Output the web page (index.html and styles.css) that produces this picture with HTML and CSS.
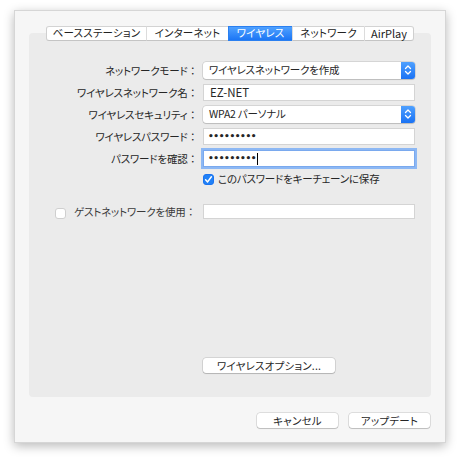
FILE: index.html
```html
<!DOCTYPE html>
<html lang="ja">
<head>
<meta charset="utf-8">
<link rel="stylesheet" href="styles.css">
</head>
<body>
<div class="window">
  <div class="tabs">
    <div class="tab t1">ベースステーション</div>
    <div class="tab t2">インターネット</div>
    <div class="tab t3 sel">ワイヤレス</div>
    <div class="tab t4">ネットワーク</div>
    <div class="tab t5">AirPlay</div>
  </div>
  <div class="group">
    <div class="form">
      <div class="label">ネットワークモード<span class="colon">：</span></div>
      <div class="popup"><span>ワイヤレスネットワークを作成</span><span class="stepper"><svg width="14" height="16" viewBox="0 0 14 16"><path d="M4.5 6.5 L7 4 L9.5 6.5 M4.5 9.5 L7 12 L9.5 9.5" fill="none" stroke="#fff" stroke-width="1.3" stroke-linecap="round" stroke-linejoin="round"/></svg></span></div>
      <div class="label">ワイヤレスネットワーク名<span class="colon">：</span></div>
      <div class="field">EZ-NET</div>
      <div class="label">ワイヤレスセキュリティ<span class="colon">：</span></div>
      <div class="popup"><span>WPA2 パーソナル</span><span class="stepper"><svg width="14" height="16" viewBox="0 0 14 16"><path d="M4.5 6.5 L7 4 L9.5 6.5 M4.5 9.5 L7 12 L9.5 9.5" fill="none" stroke="#fff" stroke-width="1.3" stroke-linecap="round" stroke-linejoin="round"/></svg></span></div>
      <div class="label">ワイヤレスパスワード<span class="colon">：</span></div>
      <div class="field dots">•••••••••</div>
      <div class="label">パスワードを確認<span class="colon">：</span></div>
      <div class="field dots focus">•••••••••<span class="caret"></span></div>
    </div>
    <div class="keychain">
      <span class="check on"><svg width="11" height="11" viewBox="0 0 11 11"><path d="M2.6 5.8 L4.6 7.9 L8.4 2.8" fill="none" stroke="#fff" stroke-width="1.5" stroke-linecap="round" stroke-linejoin="round"/></svg></span>
      <span class="ktext">このパスワードをキーチェーンに保存</span>
    </div>
    <div class="guest">
      <span class="check"></span>
      <span class="glabel">ゲストネットワークを使用<span class="colon">：</span></span>
      <div class="field gfield"></div>
    </div>
    <div class="opts"><div class="btn optbtn">ワイヤレスオプション...</div></div>
  </div>
  <div class="footer">
    <div class="btn fbtn">キャンセル</div>
    <div class="btn fbtn">アップデート</div>
  </div>
</div>
</body>
</html>
```

FILE: styles.css
```css
html, body {
  margin: 0;
  padding: 0;
  background: #ffffff;
  width: 460px;
  height: 460px;
  overflow: hidden;
}
body {
  font-family: "Noto Sans CJK JP", "Noto Sans", "Liberation Sans", sans-serif;
  font-size: 10.5px;
  letter-spacing: -0.2px;
  font-feature-settings: "palt";
  color: #262626;
}
.colon {
  font-feature-settings: normal;
  letter-spacing: 0;
}
.window {
  box-sizing: border-box;
  margin: 10px 0 0 14px;
  width: 432px;
  height: 433px;
  background: #f6f6f6;
  border: 1px solid #d6d6d6;
  box-shadow: 0 3px 10px rgba(0, 0, 0, 0.28);
  padding: 15px 14px 0 14px;
  display: flex;
  flex-direction: column;
}
.tabs {
  position: relative;
  z-index: 1;
  display: flex;
  justify-content: center;
  height: 15px;
}
.tab {
  box-sizing: border-box;
  height: 15px;
  background: #ffffff;
  border-top: 1px solid #d3d3d3;
  border-bottom: 1px solid #c4c4c4;
  border-left: 1px solid #dcdcdc;
  display: flex;
  align-items: center;
  justify-content: center;
  font-size: 10.5px;
  letter-spacing: 0.2px;
  line-height: 1;
  color: #222;
}
.t1 { width: 100px; border-left: 1px solid #cfcfcf; border-radius: 3px 0 0 3px; }
.t2 { width: 82px; }
.t3 { width: 64px; }
.t4 { width: 72px; }
.t5 { width: 50px; border-right: 1px solid #cfcfcf; border-radius: 0 3px 3px 0; letter-spacing: 0; font-size: 11px; }
.tab.sel {
  background: linear-gradient(#4fa1ff, #1c76f5);
  color: #ffffff;
  border-color: #2a7ff0;
}
.group {
  margin-top: -8px;
  height: 364px;
  box-sizing: border-box;
  background: #ebebeb;
  border-radius: 4px;
  padding: 29px 0 24px 0;
  display: flex;
  flex-direction: column;
}
.form {
  display: grid;
  grid-template-columns: 174px 212px;
  grid-auto-rows: 17px;
  row-gap: 5px;
}
.label {
  text-align: right;
  padding-right: 5px;
  line-height: 17px;
  white-space: nowrap;
}
.popup, .field {
  box-sizing: border-box;
  height: 17px;
  background: #ffffff;
  line-height: 15px;
  padding-left: 6px;
  white-space: nowrap;
}
.popup {
  border-radius: 3px;
  box-shadow: 0 0 0 0.5px rgba(0,0,0,0.18), 0 1px 1px rgba(0,0,0,0.12);
  display: flex;
  justify-content: space-between;
  align-items: stretch;
  padding-right: 0;
}
.popup span:first-child { line-height: 16px; }
.stepper {
  width: 14px;
  background: linear-gradient(#4ea0ff, #1a72f4);
  border-radius: 0 3px 3px 0;
  display: flex;
}
.field {
  border: 1px solid #d4d4d4;
  font-size: 11.5px;
  letter-spacing: 0;
}
.dots {
  font-family: "DejaVu Sans", sans-serif;
  font-size: 9px;
  font-weight: bold;
  letter-spacing: -0.4px;
  padding-left: 4px;
}
.focus {
  box-shadow: 0 0 0 2px #8db8f4;
  border-color: #7aa9ee;
  display: flex;
  align-items: center;
}
.caret {
  display: inline-block;
  width: 1px;
  height: 12px;
  background: #000;
  margin-left: 1px;
}
.keychain {
  margin: 6px 0 0 174px;
  height: 12px;
  display: flex;
  align-items: center;
}
.check {
  box-sizing: border-box;
  flex: none;
  width: 11px;
  height: 11px;
  border-radius: 3px;
  background: #ffffff;
  border: 1px solid #cfcfcf;
  display: inline-flex;
}
.check.on {
  background: #2081f7;
  border-color: #1a73f0;
}
.check.on svg { margin: -1px; }
.ktext {
  margin-left: 4px;
  line-height: 12px;
}
.guest {
  margin-top: 19px;
  height: 15px;
  display: flex;
  align-items: center;
  padding-left: 26px;
}
.guest .check { margin-top: 3px; }
.glabel {
  flex: none;
  margin-left: 8px;
  width: 129px;
  white-space: nowrap;
  color: #3a3a3a;
}
.gfield {
  flex: none;
  width: 212px;
  height: 15px;
}
.opts {
  margin-top: auto;
  padding-left: 174px;
}
.btn {
  box-sizing: border-box;
  height: 15px;
  background: #ffffff;
  border-radius: 3px;
  box-shadow: 0 0 0 0.5px rgba(0,0,0,0.2), 0 1px 1px rgba(0,0,0,0.15);
  display: flex;
  align-items: center;
  justify-content: center;
  font-size: 10.5px;
  letter-spacing: 0.2px;
  color: #262626;
}
.optbtn { width: 132px; }
.footer {
  margin-top: 16px;
  display: flex;
  justify-content: flex-end;
  gap: 11px;
  padding-right: 1px;
}
.fbtn { width: 81px; }
```
